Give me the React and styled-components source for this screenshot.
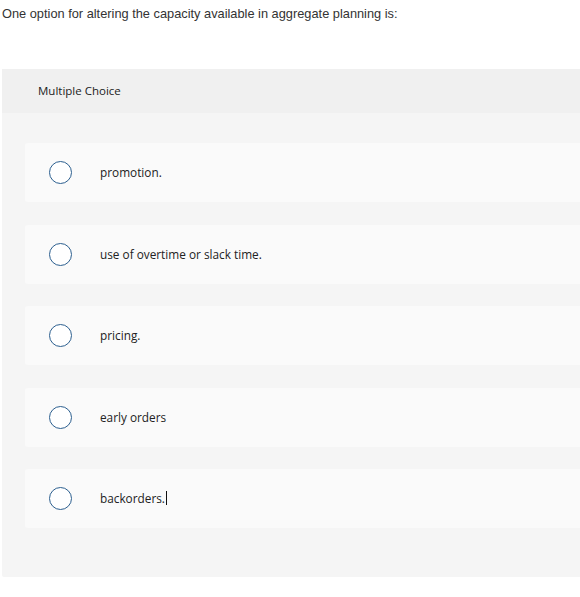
import React from "react";
import styled, { createGlobalStyle } from "styled-components";

const GlobalStyle = createGlobalStyle`
  html, body {
    margin: 0;
    padding: 0;
    background: #ffffff;
  }
  body {
    font-family: "Liberation Sans", Arial, sans-serif;
    color: #333333;
  }
`;

const Page = styled.div`
  width: 580px;
  padding: 0 0 0 2px;
  box-sizing: border-box;
`;

const Question = styled.p`
  margin: 0;
  padding-top: 6px;
  font-size: 12.8px;
  line-height: 16px;
  color: #333;
`;

const Panel = styled.div`
  margin-top: 47px;
  width: 580px;
  background: #f5f5f5;
  border-radius: 2px 0 0 2px;
  padding-bottom: 49px;
`;

const Header = styled.div`
  height: 44px;
  background: #f0f0f0;
  display: flex;
  align-items: center;
  padding-left: 36px;
  padding-bottom: 1px;
  box-sizing: border-box;
  font-family: "Open Sans", "Liberation Sans", sans-serif;
  font-size: 11.5px;
  color: #222;
`;

const List = styled.div`
  display: flex;
  flex-direction: column;
  gap: 22.5px;
  padding: 30px 0 0 23px;
`;

const Card = styled.label`
  height: 59px;
  background: #fafafa;
  border-radius: 3px 0 0 3px;
  display: flex;
  align-items: center;
  cursor: pointer;
`;

const Radio = styled.span`
  width: 21px;
  height: 21px;
  border: 1.5px solid #2c5f8f;
  border-radius: 50%;
  margin-left: 24px;
  flex-shrink: 0;
  background: #fff;
`;

const Text = styled.span`
  margin-left: 28px;
  padding-bottom: 1px;
  font-family: "Open Sans", "Liberation Sans", sans-serif;
  font-size: 11.8px;
  color: #222;
  display: flex;
  align-items: center;
`;

const Caret = styled.span`
  display: inline-block;
  width: 1px;
  height: 14px;
  background: #111;
  margin-left: 1px;
`;

const options = [
  "promotion.",
  "use of overtime or slack time.",
  "pricing.",
  "early orders",
  "backorders.",
];

export default function App() {
  return (
    <Page>
      <GlobalStyle />
      <Question>
        One option for altering the capacity available in aggregate planning is:
      </Question>
      <Panel>
        <Header>Multiple Choice</Header>
        <List>
          {options.map((o, i) => (
            <Card key={o}>
              <Radio />
              <Text>
                {o}
                {i === options.length - 1 && <Caret />}
              </Text>
            </Card>
          ))}
        </List>
      </Panel>
    </Page>
  );
}
